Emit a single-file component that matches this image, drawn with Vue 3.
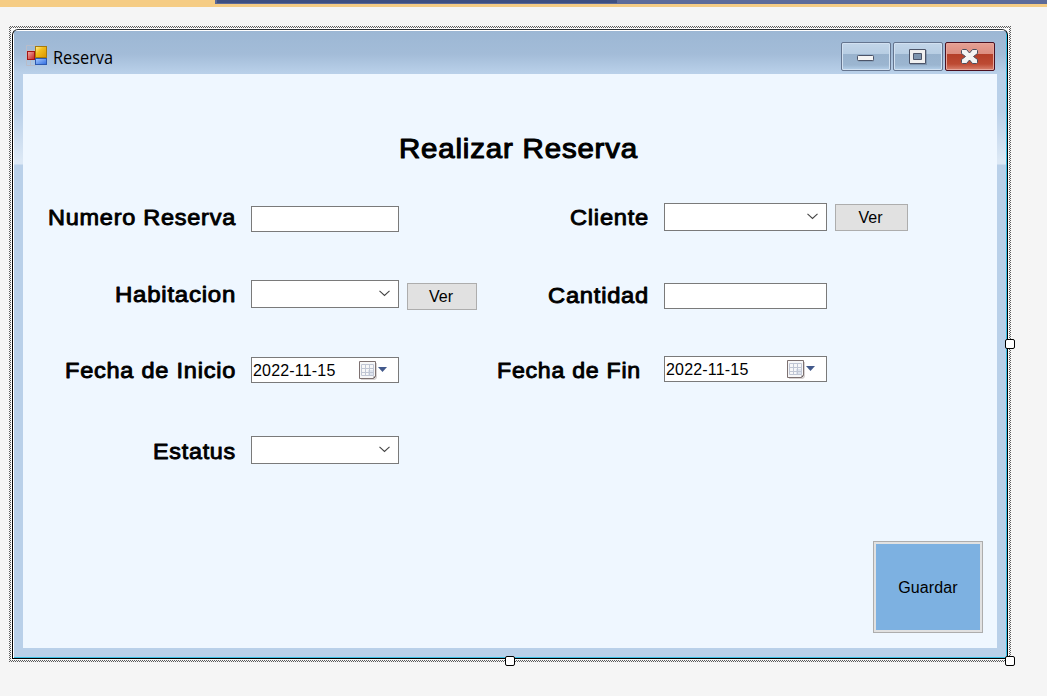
<script setup>
const rows = [
  {
    h: 77,
    cells: [
      { label: 'Numero Reserva', w: 188, base: 22, kind: 'text', top: 3 },
      { label: 'Cliente', w: 79, base: 22, kind: 'combo', top: 0, button: 1 },
    ],
  },
  {
    h: 76,
    cells: [
      { label: 'Habitacion', w: 121, base: 22, kind: 'combo', top: 0, button: 3 },
      { label: 'Cantidad', w: 101, base: 23, kind: 'text', top: 3 },
    ],
  },
  {
    h: 80,
    cells: [
      { label: 'Fecha de Inicio', w: 171, base: 22, kind: 'date', top: 1 },
      { label: 'Fecha de Fin', w: 144, base: 22, kind: 'date', top: 0, shift: true },
    ],
  },
  {
    h: 105,
    cells: [{ label: 'Estatus', w: 83, base: 23, kind: 'combo', top: 0 }],
  },
]
const date = '2022-11-15'
</script>

<template>
  <div class="designer">
    <div class="tabs"><i class="t1"></i><i class="t2"></i><i class="t3"></i></div>

    <div class="selection">
      <div class="window">
        <div class="frame">
          <div class="titlebar">
            <svg class="appicon" width="22" height="22" viewBox="0 0 22 22">
              <defs>
                <linearGradient id="gy" x1="0" y1="0" x2="1" y2="1">
                  <stop offset="0" stop-color="#fff3a0" /><stop offset=".4" stop-color="#f2bd1c" /><stop offset="1" stop-color="#d99400" />
                </linearGradient>
                <linearGradient id="gr" x1="0" y1="0" x2="1" y2="1">
                  <stop offset="0" stop-color="#f7b0a8" /><stop offset="1" stop-color="#bf2020" />
                </linearGradient>
                <linearGradient id="gb" x1="0" y1="0" x2="1" y2="1">
                  <stop offset="0" stop-color="#a8ccff" /><stop offset="1" stop-color="#2f6be0" />
                </linearGradient>
              </defs>
              <path d="M.5.5h9v5h-9zM.5 5.500v15h9v-6M4.500 14.500v6" fill="none" stroke="#b9bcc8" />
              <rect x="9.500" y="1.500" width="11" height="11" fill="url(#gy)" stroke="#a87a0a" />
              <rect x="1.500" y="6.500" width="7" height="8" fill="url(#gr)" stroke="#a51414" />
              <rect x="9.500" y="13.500" width="11" height="6" fill="url(#gb)" stroke="#2c59b0" />
            </svg>
            <svg class="caption" width="70" height="24">
              <text x="0" y="18" textLength="60" lengthAdjust="spacingAndGlyphs">Reserva</text>
            </svg>
            <div class="winbtns">
              <span class="wb">
                <svg width="50" height="29" viewBox="0 0 50 29">
                  <rect x="17" y="14.500" width="16" height="5" rx="1" fill="#3f5068" opacity=".35" />
                  <rect x="16.500" y="13.500" width="16" height="5" rx=".8" fill="#f4f4f4" stroke="#4c5468" />
                </svg>
              </span>
              <span class="wb">
                <svg width="50" height="29" viewBox="0 0 50 29">
                  <path d="M17 8h17v15h-17z" fill="#3f5068" opacity=".3" />
                  <path fill-rule="evenodd" d="M16.500 7.500h16v14h-16zM20.500 11.500v6h8v-6z" fill="#f0f0f0" stroke="#4c5468" />
                </svg>
              </span>
              <span class="wb close">
                <svg width="50" height="29" viewBox="0 0 50 29">
                  <path d="M17.500 7.500h4l3 3.500 3-3.500h4l1 1v3l-4 3 4 3v3l-1 1h-4l-3-3.500-3 3.500h-4l-1-1v-3l4-3-4-3v-3z" fill="#f4f4f4" stroke="#4c4f5f" stroke-linejoin="round" />
                </svg>
              </span>
            </div>
          </div>

          <div class="client">
            <svg class="heading" width="240" height="40">
              <text x="0" y="29" textLength="239" lengthAdjust="spacingAndGlyphs">Realizar Reserva</text>
            </svg>

            <div v-for="(row, r) in rows" :key="r" class="row" :style="{ height: row.h + 'px' }">
              <template v-for="(c, i) in row.cells" :key="c.label">
                <div class="label" :class="{ shift: c.shift }">
                  <svg :width="c.w" height="30">
                    <text x="0" :y="c.base" :textLength="c.w" lengthAdjust="spacingAndGlyphs">{{ c.label }}</text>
                  </svg>
                </div>
                <div class="field" :class="c.kind" :style="{ marginTop: c.top + 'px' }">
                  <svg v-if="c.kind === 'combo'" class="chev" width="11" height="7" viewBox="0 0 11 7">
                    <path d="M.5.8 5.500 5.500 10.500.8" fill="none" stroke="#444" stroke-width="1.100" />
                  </svg>
                  <template v-if="c.kind === 'date'">
                    <span>{{ date }}</span>
                    <svg class="cal" width="29" height="20" viewBox="0 0 29 20">
                      <path d="M2 2h16v15l-2 2h-14z" fill="#9a9090" opacity=".4" />
                      <path d="M.5.500h16v15l-2 2h-14z" fill="#f7f7f8" stroke="#7d7171" />
                      <path d="M9 9h6v6h-6z" fill="#dde3ee" />
                      <path d="M2.500 3.500h12v11h-12zM6.500 3.500v11M10.500 3.500v11M2.500 7.500h12M2.500 11.500h12" fill="none" stroke="#c0c6d4" />
                      <path d="M14.500 17.500v-2h2z" fill="#574e50" />
                      <path d="M19 6h9l-4.500 5z" fill="#42598b" />
                    </svg>
                  </template>
                </div>
                <div class="slot">
                  <button v-if="c.button" :class="{ wide: i === 1 }" :style="{ marginTop: c.button + 'px' }">Ver</button>
                </div>
              </template>
            </div>

            <div class="save"><div>Guardar</div></div>
          </div>
        </div>
      </div>
      <b class="handle right"></b>
      <b class="handle bottom"></b>
      <b class="handle corner"></b>
    </div>
  </div>
</template>

<style>
body { background: #f5f5f5; }
</style>

<style scoped>
* { box-sizing: border-box; }
svg { display: block; overflow: visible; flex: none; }
.designer { width: 1047px; height: 696px; background: #f5f5f5; font: 16px "Liberation Sans", sans-serif; color: #000; overflow: hidden; }
.tabs { height: 7px; background: #f5cc84; display: flex; margin-bottom: 19px; }
.tabs i { height: 4px; }
.t1 { width: 215px; }
.t2 { width: 402px; background: #3d4f81; border-left: 2px solid #5b6997; border-bottom: 1px solid #5b6997; }
.t3 { flex: 1; background: #5d6b99; }
.selection {
  position: relative; margin-left: 9px; width: 1002px; height: 636px; padding: 2px;
  background: conic-gradient(#5c5c5c 25%, #f5f5f5 0 50%, #5c5c5c 0 75%, #f5f5f5 0) 0 0 / 2px 2px;
}
.window { width: 998px; height: 632px; background: #fafafa; padding: 1px; }
.frame {
  height: 630px; border: 1px solid #000; border-radius: 6px 6px 0 0; padding: 1px 10px 9px;
  border-top-color: #2b2f33;
  background:
    linear-gradient(#fff, #fff) 0 0 / 1px 100% no-repeat,
    linear-gradient(#fff, #fff) 0 0 / 100% 1px no-repeat,
    linear-gradient(#39bfe4, #39bfe4) 100% 0 / 1px 100% no-repeat,
    linear-gradient(#39bfe4, #39bfe4) 0 100% / 100% 1px no-repeat,
    linear-gradient(#9cb7d4 0, #a3bcd8 24px, #b9d0e9 43px, #b9d0e9 80px, #dce8f5 130px, #dce8f5 134px, #b9d0e9 135px);
}
.titlebar { height: 43px; display: flex; align-items: flex-start; padding: 14px 2px 0 3px; }
.caption { margin: 1px 0 0 5px; }
.caption text { font: 17.500px "Open Sans", sans-serif; }
.winbtns { margin: -3px 0 0 auto; display: flex; gap: 2px; }
.wb {
  width: 50px; height: 29px; border: 1px solid #65758f; border-radius: 2px;
  box-shadow: inset 0 0 0 1px #d2e1f1;
  background: linear-gradient(#c3d6e9 0, #b7cde3 11px, #98b2cd 11px, #9bb5d0 22px, #b5d0ea 27px);
}
.wb svg { margin: -1px; }
.close {
  border-color: #4b1020; box-shadow: inset 0 0 0 1px #e6a79c;
  background: linear-gradient(#e5a094 0, #dc8d80 11px, #b43e28 11px, #bd4a33 21px, #d98270 27px);
}
.client { height: 574px; background: #eff7ff; display: flow-root; }
.heading { margin: 55px 0 34px 376px; }
.heading text { font-size: 28px; letter-spacing: .8px; stroke: #000; stroke-width: 1.100px; stroke-linejoin: round; }
.row {
  display: grid; align-items: start;
  grid-template-columns: 213px 163px 78px 172px 178px 81px;
}
.label { display: flex; justify-content: flex-end; }
.label.shift { padding-right: 8px; }
.label text { font-size: 22px; letter-spacing: .7px; stroke: #000; stroke-width: .9px; stroke-linejoin: round; }
.field { height: 26px; margin-left: 15px; background: #fff; border: 1px solid #7a7a7a; display: flex; align-items: center; }
.combo { height: 28px; }
.chev { margin: 0 8px 1px auto; }
.date { padding-left: 1px; }
.date span { padding-top: 1px; letter-spacing: .18px; }
.cal { margin: 1px 10px 0 auto; }
.slot { padding-left: 8px; }
button {
  display: block; width: 70px; height: 27px; padding: 0 2px 0 0; border: 1px solid #adadad;
  background: #e1e1e1; font: 16px "Liberation Sans", sans-serif; color: #000;
}
button.wide { width: 73px; }
.save {
  width: 110px; height: 92px; margin: 0 14px 0 auto; border: 1px solid #adadad; background: #e1e1e1; padding: 2px;
}
.save div { height: 86px; padding: 2px 0 0; letter-spacing: .1px; background: #7db1e1; display: flex; align-items: center; justify-content: center; }
.handle { position: absolute; width: 10px; height: 10px; border: 1px solid #000; border-radius: 2px; background: #fff; }
.right { left: 996px; top: 313px; }
.bottom { left: 496px; top: 630px; }
.corner { left: 996px; top: 630px; }
</style>
